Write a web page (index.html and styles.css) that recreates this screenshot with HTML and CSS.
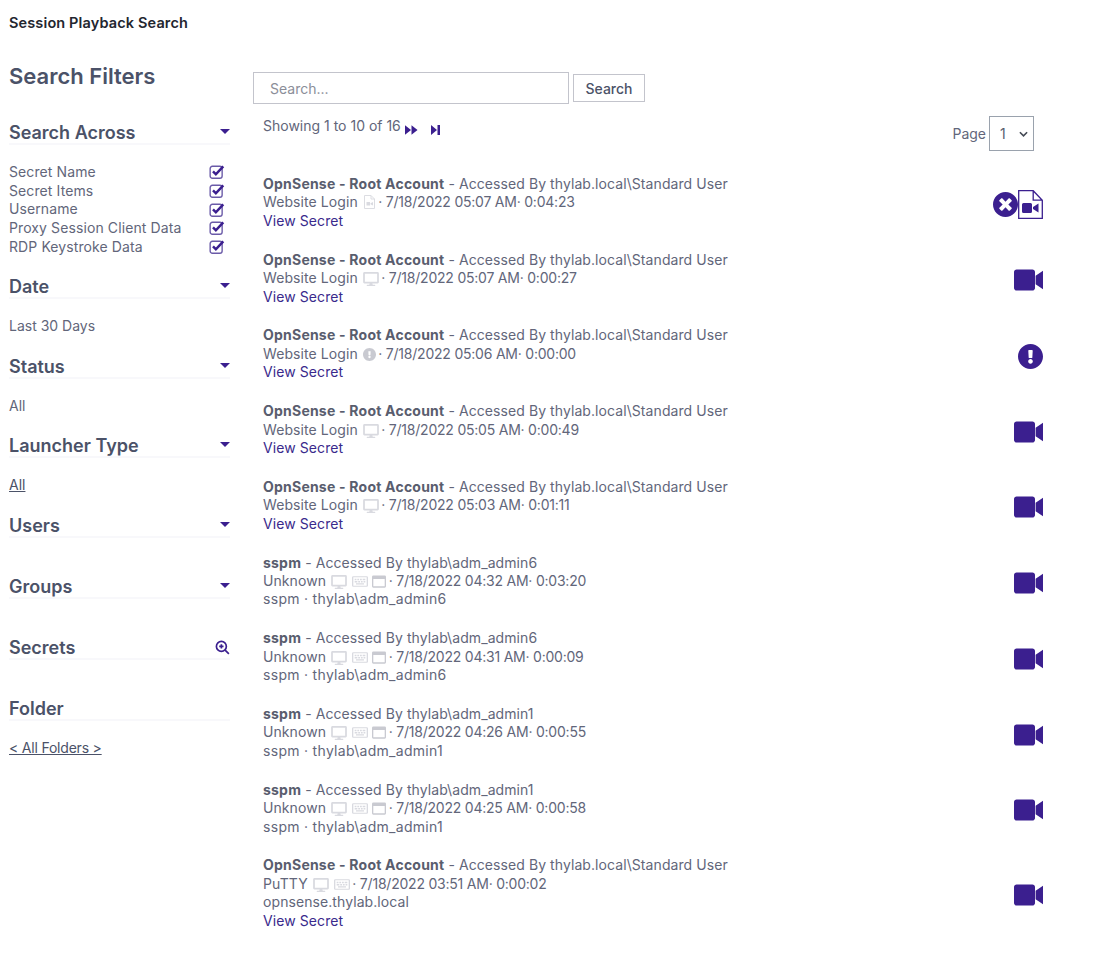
FILE: index.html
```html
<!DOCTYPE html>
<html lang="en">
  <head>
    <meta charset="UTF-8" />
    <link rel="stylesheet" href="styles.css">
    <title>Session Playback Search</title>
  </head>
  <body>
    <svg class="defs" width="0" height="0">
      <defs>
        <symbol id="i-video" viewBox="0 0 530 512"><path d="M336.2 64H47.8C21.4 64 0 85.400 0 111.800v288.400C0 426.600 21.400 448 47.800 448h288.400c26.400 0 47.800-21.400 47.800-47.800V111.800c0-26.400-21.400-47.800-47.800-47.800zM395 180L530 85v342L395 332z"/></symbol>
        <symbol id="i-times" viewBox="8 8 496 496"><path d="M256 8C119 8 8 119 8 256s111 248 248 248 248-111 248-248S393 8 256 8zm121.6 313.1c4.7 4.7 4.7 12.3 0 17L338 377.6c-4.7 4.7-12.3 4.7-17 0L256 312l-65.1 65.6c-4.7 4.7-12.3 4.7-17 0L134.4 338c-4.7-4.7-4.7-12.3 0-17l65.6-65-65.6-65.1c-4.7-4.7-4.7-12.3 0-17l39.6-39.6c4.7-4.7 12.3-4.7 17 0l65 65.7 65.1-65.6c4.7-4.7 12.3-4.7 17 0l39.6 39.6c4.7 4.7 4.7 12.3 0 17L312 256l65.6 65.1z"/></symbol>
        <symbol id="i-alert" viewBox="8 8 496 496"><path d="M504 256c0 136.997-111.043 248-248 248S8 392.997 8 256C8 119.083 119.043 8 256 8s248 111.083 248 248zm-248 50c-25.405 0-46 20.595-46 46s20.595 46 46 46 46-20.595 46-46-20.595-46-46-46zm-43.673-165.346l7.418 136c.347 6.364 5.609 11.346 11.982 11.346h48.546c6.373 0 11.635-4.982 11.982-11.346l7.418-136c.375-6.874-5.098-12.654-11.982-12.654h-63.383c-6.884 0-12.356 5.78-11.981 12.654z"/></symbol>
        <symbol id="i-desktop" viewBox="0 0 576 512"><path d="M528 0H48C21.500 0 0 21.500 0 48v320c0 26.500 21.500 48 48 48h192l-16 48h-72c-13.300 0-24 10.700-24 24s10.700 24 24 24h272c13.300 0 24-10.700 24-24s-10.700-24-24-24h-72l-16-48h192c26.500 0 48-21.500 48-48V48c0-26.500-21.500-48-48-48zm-16 352H64V64h448v288z"/></symbol>
        <symbol id="i-keys" viewBox="0 0 18 12"><path fill-rule="evenodd" d="M1.500 0h15A1.500 1.500 0 0 1 18 1.500v9a1.500 1.500 0 0 1-1.500 1.500h-15A1.500 1.500 0 0 1 0 10.500v-9A1.500 1.500 0 0 1 1.500 0zM1.500 1.200v9.600h15V1.200zM3 3h2v1.500H3zm3 0h2v1.500H6zm3 0h2v1.500H9zm3 0h3v1.500h-3zM3 5.500h3V7H3zm4 0h2V7H7zm3 0h2V7h-2zm3 0h2V7h-2zM4.500 8h9v1.500h-9z"/></symbol>
        <symbol id="i-window" viewBox="0 0 16 14"><path fill-rule="evenodd" d="M1.500 0h13A1.500 1.500 0 0 1 16 1.500v11a1.500 1.500 0 0 1-1.500 1.500h-13A1.500 1.500 0 0 1 0 12.500v-11A1.500 1.500 0 0 1 1.500 0zM1.500 4v8.500h13V4z"/></symbol>
        <symbol id="i-file" viewBox="0 0 25 29"><path fill="none" stroke="currentColor" stroke-width="1.300" d="M.7.700h14.500l9.100 9.500v18.100H.7zM15.200.700v9.500h9.100"/><path d="M5.500 13h7a1.500 1.500 0 0 1 1.500 1.500v7a1.500 1.500 0 0 1-1.500 1.500h-7A1.500 1.500 0 0 1 4 21.500v-7A1.500 1.500 0 0 1 5.500 13zm15 .500v9L15 19v-2z"/></symbol>
        <symbol id="i-minifile" viewBox="0 0 13 14"><path fill="none" stroke="currentColor" stroke-width="1" d="M1.500.500h6.500l3.500 3.500v9.500h-10zM8 .500v3.500h3.500"/><path d="M3.500 7h3.500v3.500H3.500zM10 7v3.500L7.500 9.200V8.300z"/></symbol>
      </defs>
    </svg>

    <h1 class="page-title">Session Playback Search</h1>

    <div class="layout">
      <aside class="sidebar">
        <h2 class="filters-title">Search Filters</h2>

        <section class="filter filter-across">
          <div class="filter-head"><h3>Search Across</h3><span class="caret"></span></div>
          <ul class="check-list">
            <li>Secret Name<span class="check"><svg viewBox="0 0 14 14"><rect x="1" y="2" width="10.500" height="10.500" rx="2"/><path d="M3.500 6.500l2.500 2.500 6.500-7"/></svg></span></li>
            <li>Secret Items<span class="check"><svg viewBox="0 0 14 14"><rect x="1" y="2" width="10.500" height="10.500" rx="2"/><path d="M3.500 6.500l2.500 2.500 6.500-7"/></svg></span></li>
            <li>Username<span class="check"><svg viewBox="0 0 14 14"><rect x="1" y="2" width="10.500" height="10.500" rx="2"/><path d="M3.500 6.500l2.500 2.500 6.500-7"/></svg></span></li>
            <li>Proxy Session Client Data<span class="check"><svg viewBox="0 0 14 14"><rect x="1" y="2" width="10.500" height="10.500" rx="2"/><path d="M3.500 6.500l2.500 2.500 6.500-7"/></svg></span></li>
            <li>RDP Keystroke Data<span class="check"><svg viewBox="0 0 14 14"><rect x="1" y="2" width="10.500" height="10.500" rx="2"/><path d="M3.500 6.500l2.500 2.500 6.500-7"/></svg></span></li>
          </ul>
        </section>

        <section class="filter">
          <div class="filter-head"><h3>Date</h3><span class="caret"></span></div>
          <p class="filter-value">Last 30 Days</p>
        </section>

        <section class="filter">
          <div class="filter-head"><h3>Status</h3><span class="caret"></span></div>
          <p class="filter-value">All</p>
        </section>

        <section class="filter">
          <div class="filter-head"><h3>Launcher Type</h3><span class="caret"></span></div>
          <p class="filter-value"><a href="#">All</a></p>
        </section>

        <section class="filter filter-empty">
          <div class="filter-head"><h3>Users</h3><span class="caret"></span></div>
        </section>

        <section class="filter filter-empty">
          <div class="filter-head"><h3>Groups</h3><span class="caret"></span></div>
        </section>

        <section class="filter filter-empty">
          <div class="filter-head">
            <h3>Secrets</h3>
            <svg class="zoom-icon" viewBox="0 0 16 16"><circle cx="6.800" cy="6.800" r="5.300"/><path d="M10.800 10.800l4 4M6.800 4.500v4.600M4.500 6.800h4.600"/></svg>
          </div>
        </section>

        <section class="filter">
          <div class="filter-head"><h3>Folder</h3></div>
          <p class="filter-value folder-link"><a href="#">&lt; All Folders &gt;</a></p>
        </section>
      </aside>

      <main class="results">
        <div class="search-bar">
          <input class="search-input" type="text" placeholder="Search..." />
          <button class="search-btn">Search</button>
        </div>

        <div class="pager">
          <div class="showing">
            Showing 1 to 10 of 16
            <svg class="pager-icon" viewBox="0 0 14 10"><path d="M0 0l6.500 5L0 10zM7 0l6.500 5L7 10z"/></svg>
            <svg class="pager-icon pager-last" viewBox="0 0 9 10"><path d="M0 0l6 5-6 5zM6.500 0H9v10H6.500z"/></svg>
          </div>
          <div class="page-pick">
            Page
            <select class="page-select"><option>1</option></select>
          </div>
        </div>

        <article class="row">
          <div class="row-text">
            <div><b>OpnSense - Root Account</b> - Accessed By thylab.local\Standard User</div>
            <div>Website Login <svg class="mini mini-file"><use href="#i-minifile"/></svg> <span class="stamp">· 7/18/2022 05:07 AM· 0:04:23</span></div>
            <div><a href="#">View Secret</a></div>
          </div>
          <div class="row-icons">
            <svg class="act act-circle"><use href="#i-times"/></svg>
            <svg class="act act-file"><use href="#i-file"/></svg>
          </div>
        </article>

        <article class="row">
          <div class="row-text">
            <div><b>OpnSense - Root Account</b> - Accessed By thylab.local\Standard User</div>
            <div>Website Login <svg class="mini mini-desk"><use href="#i-desktop"/></svg> <span class="stamp">· 7/18/2022 05:07 AM· 0:00:27</span></div>
            <div><a href="#">View Secret</a></div>
          </div>
          <div class="row-icons"><svg class="act act-video"><use href="#i-video"/></svg></div>
        </article>

        <article class="row">
          <div class="row-text">
            <div><b>OpnSense - Root Account</b> - Accessed By thylab.local\Standard User</div>
            <div>Website Login <svg class="mini mini-alert"><use href="#i-alert"/></svg> <span class="stamp">· 7/18/2022 05:06 AM· 0:00:00</span></div>
            <div><a href="#">View Secret</a></div>
          </div>
          <div class="row-icons"><svg class="act act-circle"><use href="#i-alert"/></svg></div>
        </article>

        <article class="row">
          <div class="row-text">
            <div><b>OpnSense - Root Account</b> - Accessed By thylab.local\Standard User</div>
            <div>Website Login <svg class="mini mini-desk"><use href="#i-desktop"/></svg> <span class="stamp">· 7/18/2022 05:05 AM· 0:00:49</span></div>
            <div><a href="#">View Secret</a></div>
          </div>
          <div class="row-icons"><svg class="act act-video"><use href="#i-video"/></svg></div>
        </article>

        <article class="row">
          <div class="row-text">
            <div><b>OpnSense - Root Account</b> - Accessed By thylab.local\Standard User</div>
            <div>Website Login <svg class="mini mini-desk"><use href="#i-desktop"/></svg> <span class="stamp">· 7/18/2022 05:03 AM· 0:01:11</span></div>
            <div><a href="#">View Secret</a></div>
          </div>
          <div class="row-icons"><svg class="act act-video"><use href="#i-video"/></svg></div>
        </article>

        <article class="row">
          <div class="row-text">
            <div><b>sspm</b> - Accessed By thylab\adm_admin6</div>
            <div>Unknown <svg class="mini mini-desk"><use href="#i-desktop"/></svg> <svg class="mini mini-keys"><use href="#i-keys"/></svg> <svg class="mini mini-win"><use href="#i-window"/></svg> <span class="stamp">· 7/18/2022 04:32 AM· 0:03:20</span></div>
            <div class="wide">sspm · thylab\adm_admin6</div>
          </div>
          <div class="row-icons"><svg class="act act-video"><use href="#i-video"/></svg></div>
        </article>

        <article class="row">
          <div class="row-text">
            <div><b>sspm</b> - Accessed By thylab\adm_admin6</div>
            <div>Unknown <svg class="mini mini-desk"><use href="#i-desktop"/></svg> <svg class="mini mini-keys"><use href="#i-keys"/></svg> <svg class="mini mini-win"><use href="#i-window"/></svg> <span class="stamp">· 7/18/2022 04:31 AM· 0:00:09</span></div>
            <div class="wide">sspm · thylab\adm_admin6</div>
          </div>
          <div class="row-icons"><svg class="act act-video"><use href="#i-video"/></svg></div>
        </article>

        <article class="row">
          <div class="row-text">
            <div><b>sspm</b> - Accessed By thylab\adm_admin1</div>
            <div>Unknown <svg class="mini mini-desk"><use href="#i-desktop"/></svg> <svg class="mini mini-keys"><use href="#i-keys"/></svg> <svg class="mini mini-win"><use href="#i-window"/></svg> <span class="stamp">· 7/18/2022 04:26 AM· 0:00:55</span></div>
            <div class="wide">sspm · thylab\adm_admin1</div>
          </div>
          <div class="row-icons"><svg class="act act-video"><use href="#i-video"/></svg></div>
        </article>

        <article class="row">
          <div class="row-text">
            <div><b>sspm</b> - Accessed By thylab\adm_admin1</div>
            <div>Unknown <svg class="mini mini-desk"><use href="#i-desktop"/></svg> <svg class="mini mini-keys"><use href="#i-keys"/></svg> <svg class="mini mini-win"><use href="#i-window"/></svg> <span class="stamp">· 7/18/2022 04:25 AM· 0:00:58</span></div>
            <div class="wide">sspm · thylab\adm_admin1</div>
          </div>
          <div class="row-icons"><svg class="act act-video"><use href="#i-video"/></svg></div>
        </article>

        <article class="row">
          <div class="row-text">
            <div><b>OpnSense - Root Account</b> - Accessed By thylab.local\Standard User</div>
            <div>PuTTY <svg class="mini mini-desk"><use href="#i-desktop"/></svg> <svg class="mini mini-keys"><use href="#i-keys"/></svg> <span class="stamp">· 7/18/2022 03:51 AM· 0:00:02</span></div>
            <div>opnsense.thylab.local</div>
            <div><a href="#">View Secret</a></div>
          </div>
          <div class="row-icons"><svg class="act act-video"><use href="#i-video"/></svg></div>
        </article>
      </main>
    </div>
  </body>
</html>
```

FILE: styles.css
```css
* {
  box-sizing: border-box;
}
body {
  margin: 0;
  padding: 14px 60px 0 9px;
  font-family: "Inter", "Open Sans", sans-serif;
  font-size: 14px;
  line-height: 18.4px;
  color: #62667a;
  background: #fff;
}
a {
  color: #3a2a8c;
  text-decoration: none;
}
.defs {
  position: absolute;
}
.page-title {
  margin: 0;
  font-size: 14.5px;
  line-height: 18px;
  font-weight: 600;
  letter-spacing: 0.13px;
  color: #23262f;
}
.layout {
  display: flex;
  margin-top: 20px;
}

/* left filters */
.sidebar {
  width: 221px;
  flex: none;
}
.filters-title {
  margin: 10px 0 0;
  font-size: 22px;
  line-height: 28px;
  font-weight: 600;
  color: #4b5268;
}
.filter {
  height: 79.6px;
}
.filter-across {
  height: 154px;
  margin-top: 31px;
}
.filter-empty {
  height: 61px;
}
.filter-head {
  display: flex;
  justify-content: space-between;
  align-items: flex-start;
  height: 24px;
  border-bottom: 2px solid #f8f8fb;
}
.filter-head h3 {
  margin: 0;
  font-size: 18px;
  line-height: 23px;
  font-weight: 600;
  color: #4b5268;
}
.caret {
  width: 0;
  height: 0;
  margin-top: 8px;
  border-left: 5px solid transparent;
  border-right: 5px solid transparent;
  border-top: 5px solid #3b1f8f;
}
.zoom-icon {
  width: 15px;
  height: 15px;
  margin-top: 4px;
  fill: none;
  stroke: #3b1f8f;
  stroke-width: 1.800;
}
.check-list {
  list-style: none;
  margin: 18px 0 0;
  padding: 0 5px 0 0;
  line-height: 18.7px;
  letter-spacing: 0.1px;
}
.check-list li {
  display: flex;
  justify-content: space-between;
  align-items: center;
}
.check {
  display: flex;
}
.check svg {
  width: 16px;
  height: 16px;
  fill: none;
  stroke: #3b1f8f;
}
.check rect {
  stroke: #6a5aa8;
  stroke-width: 1.200;
}
.check path {
  stroke-width: 2.200;
}
.filter-value {
  margin: 18px 0 0;
}
.filter-value a {
  color: #4b5268;
  text-decoration: underline;
}
.folder-link {
  letter-spacing: -0.2px;
}

/* results */
.results {
  flex: 1;
  margin-left: 23px;
  padding-top: 20px;
}
.search-bar {
  display: flex;
  align-items: center;
  gap: 4px;
}
.search-input {
  width: 316px;
  height: 32px;
  padding: 0 16px;
  border: 1px solid #c3c4cc;
  font-family: inherit;
  font-size: 14px;
  color: #595d6e;
}
.search-input::placeholder {
  color: #8b8e99;
}
.search-btn {
  width: 72px;
  height: 28px;
  padding: 0;
  background: #fff;
  border: 1px solid #c3c4cc;
  font-family: inherit;
  font-size: 14px;
  font-weight: 500;
  color: #4b5268;
}
.pager {
  display: flex;
  justify-content: space-between;
  padding: 13px 9px 0 10px;
  height: 71px;
}
.pager-icon {
  width: 13px;
  height: 10px;
  margin-left: 0;
  fill: #3b1f8f;
  vertical-align: -4px;
}
.pager-last {
  width: 9px;
  margin-left: 9px;
}
.page-pick {
  display: flex;
  align-items: flex-start;
  gap: 3px;
  margin-top: -1px;
  line-height: 36px;
}
.page-select {
  width: 45px;
  height: 35px;
  padding: 0 0 0 10px;
  border: 1px solid #9aa2ad;
  border-radius: 0;
  background: #fff url("data:image/svg+xml,%3Csvg xmlns='http://www.w3.org/2000/svg' viewBox='0 0 10 6'%3E%3Cpath d='M1 1l4 4 4-4' fill='none' stroke='%23444a55' stroke-width='1.800'/%3E%3C/svg%3E") no-repeat right 5px center / 9px 6px;
  appearance: none;
  font-family: inherit;
  font-size: 14px;
  color: #595d6e;
}
.row {
  display: flex;
  justify-content: space-between;
  align-items: center;
  padding: 0 0 20.5px 10px;
}
.row-text {
  letter-spacing: 0.08px;
}
.row-text b {
  font-weight: 700;
  letter-spacing: 0.22px;
  color: #595d6e;
}
.stamp {
  margin-left: -1.5px;
  letter-spacing: -0.22px;
}
.wide {
  letter-spacing: 0.3px;
}
.row-icons {
  display: flex;
  align-items: center;
  margin-top: 4px;
}
.act {
  display: block;
  fill: #3b1f8f;
  color: #3b1f8f;
}
.act-video {
  width: 29px;
  height: 28px;
}
.act-circle {
  width: 25px;
  height: 25px;
}
.act-file {
  width: 25px;
  height: 29px;
}
.mini {
  margin-left: 1px;
  fill: #d9dae0;
  color: #dcdde2;
  vertical-align: -2px;
}
.mini-desk {
  width: 16px;
  height: 14px;
  vertical-align: -3px;
}
.mini-keys {
  width: 16px;
  height: 11px;
  vertical-align: -1px;
}
.mini-win {
  width: 14px;
  height: 13px;
  margin-left: 0;
  fill: #c9cad1;
}
.mini-file {
  width: 13px;
  height: 14px;
}
.mini-alert {
  width: 13px;
  height: 13px;
  fill: #c9cad1;
}
```
